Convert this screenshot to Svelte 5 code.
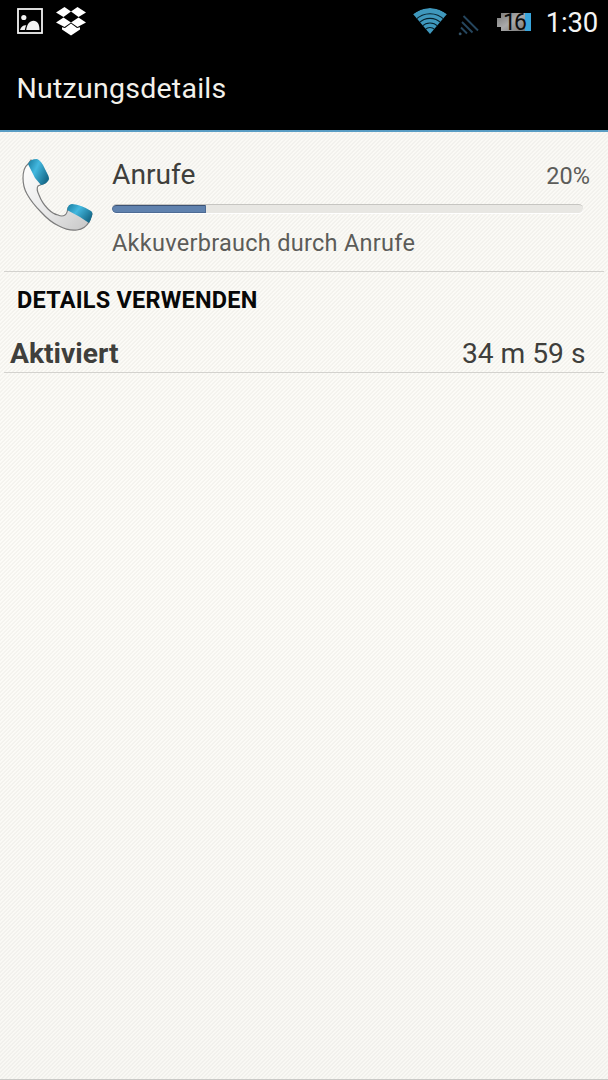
<!-- App.svelte -->
<script lang="ts">
  const title = 'Nutzungsdetails';
  const clock = '1:30';
  const batteryLevel = 16;

  const entry = {
    name: 'Anrufe',
    percent: 20,
    description: 'Akkuverbrauch durch Anrufe'
  };

  const details = [{ label: 'Aktiviert', value: '34 m 59 s' }];
</script>

<div class="screen">
  <header>
    <div class="status-bar">
      <div class="notifications">
        <svg width="26" height="26" viewBox="0 0 26 26">
          <rect x="1" y="1" width="24" height="24" fill="none" stroke="#f2f2f2" stroke-width="1.800" />
          <circle cx="6.800" cy="9.500" r="2.600" fill="#f2f2f2" />
          <path d="M3 22Q4.500 17 9.300 17.300Q8.300 19 7.800 22ZM9.200 22C10 16.500 12.500 12.800 16.500 12.800C20.500 12.800 22.500 16.500 22.500 22Z" fill="#f2f2f2" />
        </svg>
        <svg width="30" height="29" viewBox="0 0 30 29">
          <path d="M8.500 0L15 4.500L7.500 10L0 5.500ZM21.500 0L30 5.500L22.500 10L15 4.500ZM7.500 10.500L15 15.500L8.500 20L0 15.500ZM22.500 10.500L30 15.500L21.500 20L15 15.500Z" fill="#fff" />
          <path d="M15 16.500L9 21L6 20.300V22.500L15 28.500L24 22.500V20.300L21 21Z" fill="#fff" />
        </svg>
      </div>

      <div class="system">
        <svg class="wifi" width="34" height="27" viewBox="0 0 34 27">
          <defs>
            <clipPath id="fan"><path d="M17 26L0 6Q17 -6 34 6Z" /></clipPath>
          </defs>
          <g clip-path="url(#fan)">
            <circle cx="17" cy="26" r="26" fill="#3f98bd" />
            <g fill="none" stroke="#06202c" stroke-width="1.100">
              <circle cx="17" cy="26" r="20.300" />
              <circle cx="17" cy="26" r="15.600" />
              <circle cx="17" cy="26" r="11" />
              <circle cx="17" cy="26" r="6.500" />
            </g>
          </g>
        </svg>
        <svg class="signal" width="22" height="21" viewBox="0 0 22 21">
          <g stroke="#25465e" stroke-width="1.900" fill="none">
            <path d="M5.500 1L20 15.500M4 7L14.500 17.500M3 12.500L9 18.500" />
          </g>
          <path d="M0.500 19L2 17L4 19L2 20.500Z" fill="#36566c" />
        </svg>
        <svg class="battery" width="34" height="34" viewBox="0 -7 34 34">
          <defs>
            <linearGradient id="metal" x2="1" y2="1">
              <stop offset="0" stop-color="#777" />
              <stop offset="0.500" stop-color="#aaa" />
              <stop offset="1" stop-color="#777" />
            </linearGradient>
          </defs>
          <path d="M4 1H28V19H4V15H0V6H4Z" fill="url(#metal)" />
          <rect x="28" y="1" width="6" height="18" fill="#39a5dc" />
          <text x="17" y="18.200" text-anchor="middle">{batteryLevel}</text>
        </svg>
        <span class="clock">{clock}</span>
      </div>
    </div>
    <h1>{title}</h1>
  </header>

  <section class="entry">
    <svg class="phone" width="72" height="74" viewBox="0 0 72 74">
      <defs>
        <linearGradient id="body" x1="0" y1="0" x2="1" y2="1">
          <stop offset="0" stop-color="#fff" />
          <stop offset="0.550" stop-color="#e8e8e8" />
          <stop offset="1" stop-color="#c4c4c4" />
        </linearGradient>
        <linearGradient id="cap" x1="0" y1="0" x2="1" y2="0.600">
          <stop offset="0" stop-color="#16789b" />
          <stop offset="0.450" stop-color="#43b8df" />
          <stop offset="1" stop-color="#176c8c" />
        </linearGradient>
      </defs>
      <path d="M6 6Q1 10 1 20Q1 29 5 36Q10 45 19 54Q28 64 37 68Q46 73 55 72Q63 71 67 64L70 56L46 50Q45 56 43 57Q40 59 36 57Q31 56 26 51Q20 45 17 37Q14 31 16 28L23 25L9 2Z" fill="url(#body)" stroke="#7c7c7c" stroke-width="1.200" />
      <path d="M6 6Q8 1 15 1Q18 2 21 7L26 17Q28 21 26 23Q24 26 19 27L13 20Z" fill="url(#cap)" />
      <path d="M45 52Q46 46 50 46Q60 47 69 53Q71 54 70 58Q69 62 67 65L58 59Z" fill="url(#cap)" />
    </svg>
    <div class="info">
      <div class="heading">
        <span class="name">{entry.name}</span>
        <span class="percent">{entry.percent}%</span>
      </div>
      <div class="track">
        <div class="fill" style="width: {entry.percent}%"></div>
      </div>
      <p>{entry.description}</p>
    </div>
  </section>

  <h2>DETAILS VERWENDEN</h2>

  {#each details as detail}
    <div class="detail">
      <span class="label">{detail.label}</span>
      <span class="value">{detail.value}</span>
    </div>
  {/each}
</div>

<style>
  :global(body) {
    background: #f6f5f1;
  }
  .screen {
    box-sizing: border-box;
    height: 1080px;
    overflow: hidden;
    font-family: Roboto, "Liberation Sans", sans-serif;
    color: #3f3f3c;
    white-space: nowrap;
    border-bottom: 1px solid #c9c9c6;
    /* fine diagonal weave, tiled every 4px */
    background:
      linear-gradient(135deg, rgba(100, 100, 80, 0.05) 12.5%, transparent 12.5% 37.5%, rgba(100, 100, 80, 0.05) 37.5% 62.5%, transparent 62.5% 87.5%, rgba(100, 100, 80, 0.05) 87.5%) 0 0 / 4px 4px,
      linear-gradient(#f9f8f4, #fdfcf8 50%, #f9f8f4);
  }
  header {
    box-sizing: border-box;
    height: 132px;
    background: #000;
    border-bottom: 2px solid #5a9dc4;
  }
  .status-bar {
    display: flex;
    justify-content: space-between;
    height: 44px;
    padding: 0 10px 0 17px;
  }
  .notifications {
    display: flex;
    gap: 13px;
    padding-top: 7px;
  }
  .notifications svg:first-child {
    margin-top: 1px;
  }
  .system {
    display: flex;
    align-items: flex-start;
  }
  .wifi {
    margin: 8px 11px 0 0;
  }
  .signal {
    margin: 15px 17px 0 0;
  }
  .battery {
    margin: 5px 15px 0 0;
  }
  .battery text {
    font-family: Roboto, sans-serif;
    font-size: 23px;
    font-weight: 400;
    letter-spacing: -2px;
    fill: #0c0c0c;
  }
  .clock {
    font-size: 27.5px;
    line-height: 45px;
    letter-spacing: -0.2px;
    color: #f4f4f4;
  }
  h1 {
    margin: 0;
    padding-left: 16.500px;
    font-size: 28.500px;
    font-weight: 400;
    line-height: 89px;
    letter-spacing: 0.25px;
    color: #f3f1eb;
  }
  .entry {
    box-sizing: border-box;
    display: flex;
    height: 140px;
    margin: 0 4px;
    border-bottom: 1px solid #d3d2ce;
  }
  .phone {
    flex: none;
    margin: 26px 18px 0 18px;
  }
  .info {
    flex: 1;
    padding: 26px 14px 0 0;
  }
  .heading {
    display: flex;
    justify-content: space-between;
    align-items: baseline;
    height: 46px;
    line-height: 34px;
  }
  .name {
    font-size: 28.2px;
  }
  .percent {
    font-size: 23.5px;
    color: #5c5c59;
  }
  .track {
    box-sizing: border-box;
    height: 9px;
    margin-right: 7px;
    overflow: hidden;
    border-top: 1px solid #c6c5c1;
    border-radius: 5px;
    background: #e8e7e3;
    box-shadow: 0 1px 0 #fff;
  }
  .fill {
    box-sizing: border-box;
    height: 8px;
    border: 1px solid #4d6b94;
    border-top-color: #3c5273;
    border-radius: 4px 0 0 4px;
    background: #6082ae;
  }
  p {
    margin: 15px 0 0;
    font-size: 23.5px;
    line-height: 31px;
    letter-spacing: 0.28px;
    color: #5c5c59;
  }
  h2 {
    margin: 0;
    padding-left: 17px;
    font-size: 23.5px;
    font-weight: 700;
    line-height: 57px;
    height: 56px;
    letter-spacing: 0.22px;
    color: #080808;
  }
  .detail {
    box-sizing: border-box;
    display: flex;
    justify-content: space-between;
    height: 45px;
    margin: 0 4px;
    padding: 0 18.500px 0 6px;
    border-bottom: 1px solid #d3d2ce;
    font-size: 28.2px;
    line-height: 51px;
  }
  .label {
    font-weight: 700;
  }
</style>
